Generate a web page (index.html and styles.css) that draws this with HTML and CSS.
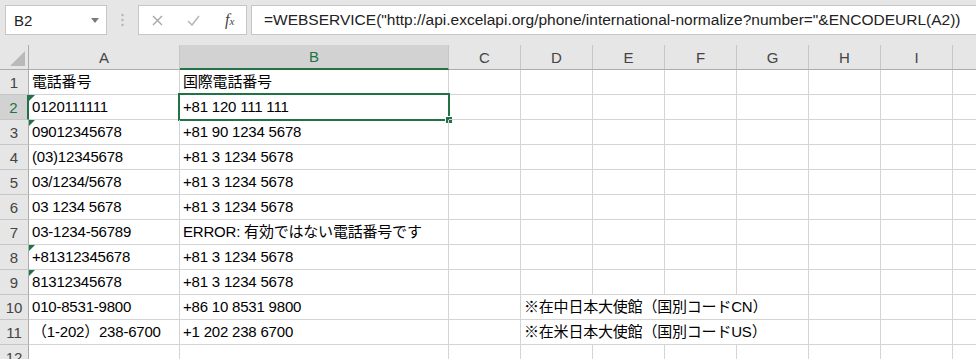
FILE: index.html
```html
<!DOCTYPE html>
<html lang="ja">

<head>
    <meta charset="UTF-8">
    <title>Book1 - Excel</title>
    <link rel="stylesheet" href="styles.css">
</head>

<body>
    <div class="toolbar">
        <div class="namebox">
            <span>B2</span>
            <svg class="caret" width="8" height="5" viewBox="0 0 8 5"><path d="M0 0h8L4 5z" fill="#7a7a7a"/></svg>
        </div>
        <div class="grip">
            <svg width="3" height="14" viewBox="0 0 3 14"><circle cx="1.5" cy="2" r="1.2" fill="#b5b5b5"/><circle cx="1.5" cy="7" r="1.2" fill="#b5b5b5"/><circle cx="1.5" cy="12" r="1.2" fill="#b5b5b5"/></svg>
        </div>
        <div class="fbuttons">
            <svg class="fbtn" width="11" height="11" viewBox="0 0 11 11"><path d="M1 1l9 9M10 1l-9 9" stroke="#a6a6a6" stroke-width="1.4" fill="none"/></svg>
            <svg class="fbtn" width="13" height="11" viewBox="0 0 13 11"><path d="M1 6l4 4 7-9" stroke="#b8b8b8" stroke-width="1.6" fill="none"/></svg>
            <span class="fx">f<small>x</small></span>
        </div>
        <div class="formula">=WEBSERVICE("http://api.excelapi.org/phone/international-normalize?number="&amp;ENCODEURL(A2))</div>
    </div>

    <div class="sheet" id="sheet"></div>

    <script>
        const sheet = document.getElementById('sheet');
        const cols = ['A', 'B', 'C', 'D', 'E', 'F', 'G', 'H', 'I', ''];

        // [A, B, D(note), numberAsText]
        const rows = [
            ['電話番号', '国際電話番号'],
            ['0120111111', '+81 120 111 111', '', true],
            ['09012345678', '+81 90 1234 5678', '', true],
            ['(03)12345678', '+81 3 1234 5678'],
            ['03/1234/5678', '+81 3 1234 5678'],
            ['03 1234 5678', '+81 3 1234 5678'],
            ['03-1234-56789', 'ERROR: 有効ではない電話番号です'],
            ['+81312345678', '+81 3 1234 5678', '', true],
            ['81312345678', '+81 3 1234 5678', '', true],
            ['010-8531-9800', '+86 10 8531 9800', '※在中日本大使館（国別コードCN）'],
            ['（1-202）238-6700', '+1 202 238 6700', '※在米日本大使館（国別コードUS）'],
            ['', '']
        ];

        let html = '<div class="corner"><span class="corner-tri"></span></div>';
        cols.forEach(c => {
            html += `<div class="colhead${c === 'B' ? ' active' : ''}">${c}</div>`;
        });

        rows.forEach((r, i) => {
            const n = i + 1;
            html += `<div class="rowhead${n === 2 ? ' active' : ''}">${n}</div>`;
            html += `<div class="cell${r[3] ? ' numtext' : ''}">${r[0]}</div>`;
            html += `<div class="cell">${r[1]}${n === 2 ? '<span class="selection"><span class="handle"></span></span>' : ''}</div>`;
            html += '<div class="cell"></div>';
            if (r[2]) {
                html += `<div class="cell span4">${r[2]}</div>`;
            } else {
                html += '<div class="cell"></div>'.repeat(4);
            }
            html += '<div class="cell"></div>'.repeat(3);
        });

        sheet.innerHTML = html;
    </script>
</body>

</html>
```

FILE: styles.css
```css
* {
    box-sizing: border-box;
}

body {
    margin: 0;
    width: 976px;
    height: 359px;
    overflow: hidden;
    background-color: #fff;
    font-family: 'Liberation Sans', 'Noto Sans CJK JP', sans-serif;
    color: #000;
}

.toolbar {
    display: flex;
    align-items: flex-start;
    height: 45px;
    padding-top: 5px;
    background-color: #e6e6e6;
}

.namebox {
    position: relative;
    width: 102px;
    height: 30px;
    margin-left: 5px;
    padding-left: 8px;
    display: flex;
    align-items: center;
    background-color: #fff;
    border: 1px solid #c6c6c6;
    font-size: 15px;
    color: #222;
}

.caret {
    position: absolute;
    right: 7px;
    top: 12px;
}

.grip {
    width: 31px;
    height: 30px;
    display: flex;
    align-items: center;
    justify-content: center;
}

.fbuttons {
    width: 109px;
    height: 30px;
    display: flex;
    align-items: center;
    padding-left: 13px;
    background-color: #fff;
    border: 1px solid #c6c6c6;
}

.fbtn {
    margin-right: 24px;
}

.fbtn + .fbtn {
    margin-right: 25px;
}

.fx {
    font-family: 'Liberation Serif', serif;
    font-style: italic;
    font-size: 16px;
    color: #444;
}

.fx small {
    font-size: 11px;
}

.formula {
    flex: 1;
    height: 30px;
    margin-left: 4px;
    margin-right: -4px;
    padding-left: 12px;
    display: flex;
    align-items: center;
    background-color: #fff;
    border: 1px solid #c6c6c6;
    font-size: 15.5px;
    color: #222;
    white-space: nowrap;
    overflow: hidden;
}

.sheet {
    display: grid;
    grid-template-columns: 29px 151px 269px repeat(7, 72px) 30px;
    grid-auto-rows: 25px;
}

.corner,
.colhead,
.rowhead {
    background-color: #e6e6e6;
    color: #444;
    font-size: 15px;
}

.corner {
    position: relative;
    border-right: 1px solid #ababab;
    border-bottom: 1px solid #ababab;
}

.corner-tri {
    position: absolute;
    right: 3px;
    bottom: 3px;
    border-left: 15px solid transparent;
    border-bottom: 15px solid #b9b9b9;
}

.colhead {
    display: flex;
    align-items: center;
    justify-content: center;
    border-right: 1px solid #c6c6c6;
    border-bottom: 1px solid #ababab;
}

.rowhead {
    display: flex;
    align-items: center;
    justify-content: center;
    border-right: 1px solid #ababab;
    border-bottom: 1px solid #c6c6c6;
}

.colhead.active {
    background-color: #d2d2d2;
    color: #217346;
    border-bottom: 2px solid #217346;
}

.rowhead.active {
    background-color: #d2d2d2;
    color: #217346;
    border-right: 2px solid #217346;
}

.cell {
    position: relative;
    display: flex;
    align-items: flex-end;
    padding: 0 3px 4px;
    border-right: 1px solid #d4d4d4;
    border-bottom: 1px solid #d4d4d4;
    font-size: 15px;
    line-height: 17px;
    letter-spacing: -0.2px;
    white-space: nowrap;
}

.span4 {
    grid-column: span 4;
}

.numtext::before {
    content: '';
    position: absolute;
    left: 0;
    top: 0;
    border-top: 6px solid #217346;
    border-right: 6px solid transparent;
}

.selection {
    position: absolute;
    left: -2px;
    top: -2px;
    right: -2px;
    bottom: -2px;
    border: 2px solid #217346;
}

.handle {
    position: absolute;
    right: -4px;
    bottom: -4px;
    width: 6px;
    height: 6px;
    background-color: #217346;
    outline: 1px solid #fff;
}
```
